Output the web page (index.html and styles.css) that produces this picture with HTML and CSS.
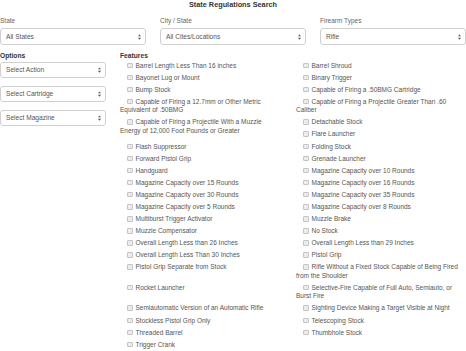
FILE: index.html
```html
<!DOCTYPE html>
<html lang="en">
<head>
<meta charset="utf-8">
<title>State Regulations Search</title>
<link rel="stylesheet" href="styles.css">
</head>
<body>
<div class="page">
  <h1 class="title">State Regulations Search</h1>

  <div class="filters">
    <div class="field">
      <label class="field-label">State</label>
      <div class="select select-lg"><span>All States</span><svg class="caret" viewBox="0 0 4 7"><path d="M2 0L4 2.6H0z M2 7L4 4.4H0z"/></svg></div>
    </div>
    <div class="field">
      <label class="field-label">City / State</label>
      <div class="select select-lg"><span>All Cites/Locations</span><svg class="caret" viewBox="0 0 4 7"><path d="M2 0L4 2.6H0z M2 7L4 4.4H0z"/></svg></div>
    </div>
    <div class="field">
      <label class="field-label">Firearm Types</label>
      <div class="select select-lg"><span>Rifle</span><svg class="caret" viewBox="0 0 4 7"><path d="M2 0L4 2.6H0z M2 7L4 4.4H0z"/></svg></div>
    </div>
  </div>

  <div class="lower">
    <div class="options">
      <div class="section-label">Options</div>
      <div class="select select-sm"><span>Select Action</span><svg class="caret" viewBox="0 0 4 7"><path d="M2 0L4 2.6H0z M2 7L4 4.4H0z"/></svg></div>
      <div class="select select-sm"><span>Select Cartridge</span><svg class="caret" viewBox="0 0 4 7"><path d="M2 0L4 2.6H0z M2 7L4 4.4H0z"/></svg></div>
      <div class="select select-sm"><span>Select Magazine</span><svg class="caret" viewBox="0 0 4 7"><path d="M2 0L4 2.6H0z M2 7L4 4.4H0z"/></svg></div>
    </div>
    <div class="features">
      <div class="section-label">Features</div>
      <div class="feature-grid">
        <label class="feat"><span class="box"></span>Barrel Length Less Than 16 inches</label>
        <label class="feat"><span class="box"></span>Barrel Shroud</label>
        <label class="feat"><span class="box"></span>Bayonet Lug or Mount</label>
        <label class="feat"><span class="box"></span>Binary Trigger</label>
        <label class="feat"><span class="box"></span>Bump Stock</label>
        <label class="feat"><span class="box"></span>Capable of Firing a .50BMG Cartridge</label>
        <label class="feat"><span class="box"></span>Capable of Firing a 12.7mm or Other Metric Equivalent of .50BMG</label>
        <label class="feat"><span class="box"></span>Capable of Firing a Projectile Greater Than .60 Caliber</label>
        <label class="feat feat-tall"><span class="box"></span>Capable of Firing a Projectile With a Muzzle Energy of 12,000 Foot Pounds or Greater</label>
        <label class="feat"><span class="box"></span>Detachable Stock</label>
        <label class="feat"><span class="box"></span>Flare Launcher</label>
        <label class="feat"><span class="box"></span>Flash Suppressor</label>
        <label class="feat"><span class="box"></span>Folding Stock</label>
        <label class="feat"><span class="box"></span>Forward Pistol Grip</label>
        <label class="feat"><span class="box"></span>Grenade Launcher</label>
        <label class="feat"><span class="box"></span>Handguard</label>
        <label class="feat"><span class="box"></span>Magazine Capacity over 10 Rounds</label>
        <label class="feat"><span class="box"></span>Magazine Capacity over 15 Rounds</label>
        <label class="feat"><span class="box"></span>Magazine Capacity over 16 Rounds</label>
        <label class="feat"><span class="box"></span>Magazine Capacity over 30 Rounds</label>
        <label class="feat"><span class="box"></span>Magazine Capacity over 35 Rounds</label>
        <label class="feat"><span class="box"></span>Magazine Capacity over 5 Rounds</label>
        <label class="feat"><span class="box"></span>Magazine Capacity over 8 Rounds</label>
        <label class="feat"><span class="box"></span>Multiburst Trigger Activator</label>
        <label class="feat"><span class="box"></span>Muzzle Brake</label>
        <label class="feat"><span class="box"></span>Muzzle Compensator</label>
        <label class="feat"><span class="box"></span>No Stock</label>
        <label class="feat"><span class="box"></span>Overall Length Less than 26 Inches</label>
        <label class="feat"><span class="box"></span>Overall Length Less than 29 Inches</label>
        <label class="feat"><span class="box"></span>Overall Length Less Than 30 Inches</label>
        <label class="feat"><span class="box"></span>Pistol Grip</label>
        <label class="feat"><span class="box"></span>Pistol Grip Separate from Stock</label>
        <label class="feat"><span class="box"></span>Rifle Without a Fixed Stock Capable of Being Fired from the Shoulder</label>
        <label class="feat"><span class="box"></span>Rocket Launcher</label>
        <label class="feat"><span class="box"></span>Selective-Fire Capable of Full Auto, Semiauto, or Burst Fire</label>
        <label class="feat"><span class="box"></span>Semiautomatic Version of an Automatic Rifle</label>
        <label class="feat"><span class="box"></span>Sighting Device Making a Target Visible at Night</label>
        <label class="feat"><span class="box"></span>Stockless Pistol Grip Only</label>
        <label class="feat"><span class="box"></span>Telescoping Stock</label>
        <label class="feat"><span class="box"></span>Threaded Barrel</label>
        <label class="feat"><span class="box"></span>Thumbhole Stock</label>
        <label class="feat"><span class="box"></span>Trigger Crank</label>
      </div>
    </div>
  </div>
</div>
</body>
</html>
```
FILE: styles.css
```css
html, body {
  margin: 0;
  padding: 0;
  background: #ffffff;
}

body {
  font-family: "Liberation Sans", Arial, sans-serif;
  color: #555555;
  font-size: 6.5px;
}

.page {
  width: 466px;
}

.title {
  margin: 0;
  font-size: 7.3px;
  line-height: 9px;
  font-weight: bold;
  color: #333333;
  text-align: center;
}

.filters {
  display: grid;
  grid-template-columns: 146px 146px 146px;
  column-gap: 14px;
  margin-top: 8px;
}

.field {
  display: flex;
  flex-direction: column;
}

.field-label {
  font-size: 6.5px;
  line-height: 8px;
  color: #666666;
  margin-bottom: 3.3px;
}

.select {
  display: flex;
  align-items: center;
  justify-content: space-between;
  box-sizing: border-box;
  border: 1px solid #d0d0d0;
  border-radius: 3px;
  padding: 0 4px 0 5px;
  font-size: 6.6px;
  color: #555555;
  background: #ffffff;
}

.select-lg {
  height: 17px;
}

.select-sm {
  height: 16px;
  width: 106px;
  margin-bottom: 8px;
}

.caret {
  width: 3px;
  height: 6px;
  fill: #555555;
}

.lower {
  display: grid;
  grid-template-columns: 120px 346px;
  margin-top: 6.7px;
}

.section-label {
  font-weight: bold;
  font-size: 6.7px;
  line-height: 8px;
  color: #333333;
  margin-bottom: 1.6px;
}

.feature-grid {
  display: grid;
  grid-template-columns: 166px 170px;
  column-gap: 10px;
  align-items: start;
}

.feat {
  display: block;
  line-height: 8.4px;
  margin-bottom: 3.7px;
  text-indent: 7px;
  color: #555555;
  padding-right: 6px;
}

.feat-tall {
  grid-row: span 2;
}

.box {
  display: inline-block;
  box-sizing: border-box;
  width: 5.5px;
  height: 5.5px;
  border: 1px solid #c4c4c4;
  border-radius: 1px;
  background: #ececec;
  margin-right: 3px;
  vertical-align: -0.5px;
}
```
